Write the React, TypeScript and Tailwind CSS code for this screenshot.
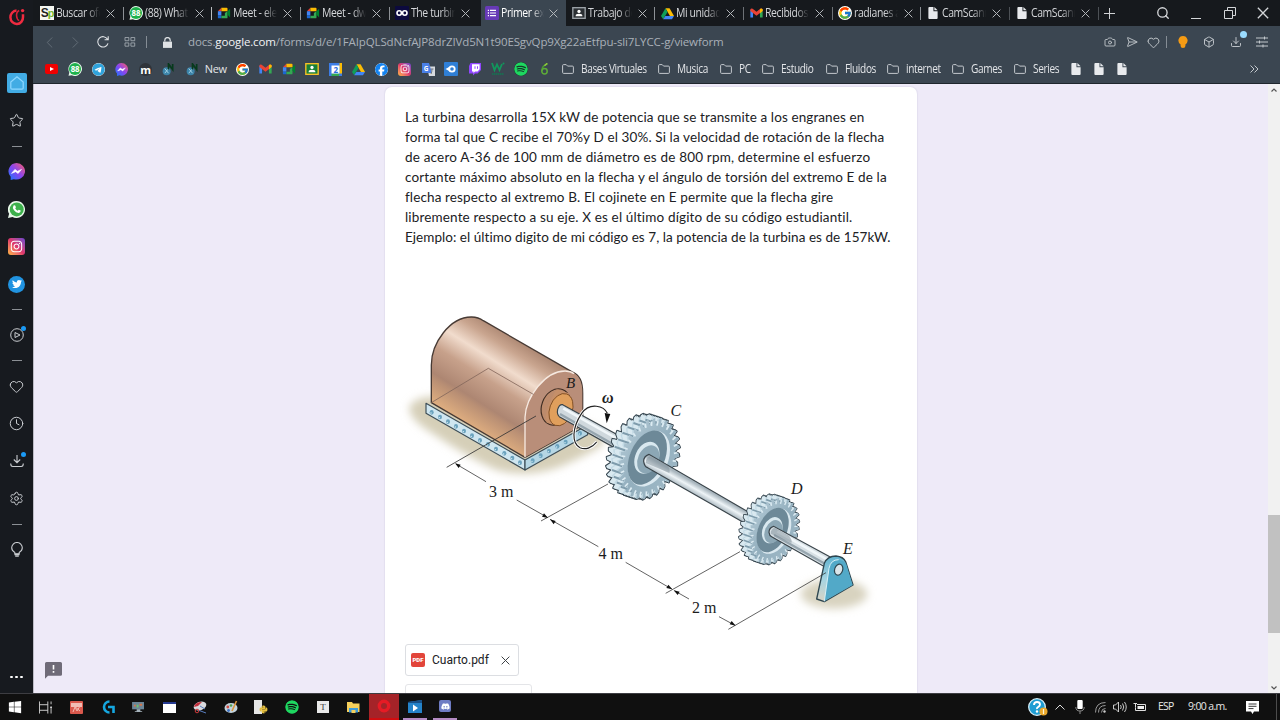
import React from 'react';
import {
  FaYoutube, FaTelegram, FaFacebook, FaInstagram, FaTwitter, FaSpotify, FaDiscord, FaWindows, FaPython,
} from 'react-icons/fa6';
import { FcGoogle } from 'react-icons/fc';
import { Camera, Heart, Box, Download, Star, Clock, Settings, Search, SendHorizontal } from 'lucide-react';

/* ---------- small brand drawings ---------- */

const Meet = () => (
  <svg viewBox="0 0 16 16" className="size-[14px]">
    <path d="M1 6l4-4v4z" fill="#ea4335" />
    <path d="M5 2h6a1 1 0 0 1 1 1v3H8V6H5z" fill="#fbbc04" />
    <path d="M1 6h4v5H1z" fill="#4285f4" />
    <path d="M1 11h4v3H2a1 1 0 0 1-1-1z" fill="#1967d2" />
    <path d="M5 11h4V8l3-2v7a1 1 0 0 1-1 1H5z" fill="#34a853" />
    <path d="M12 6l3-3v10l-3-3z" fill="#00832d" />
  </svg>
);
const Drive = () => (
  <svg viewBox="0 0 16 16" className="size-[13px]">
    <path d="M5.5 1.5h5L16 11h-5z" fill="#fbbc04" />
    <path d="M5.5 1.5L8 6 2.7 15 0 11z" fill="#0f9d58" />
    <path d="M5.3 11H16l-2.5 4H2.7z" fill="#4285f4" />
  </svg>
);
const Gmail = () => (
  <svg viewBox="0 0 16 13" className="h-[10px] w-[13px]">
    <path d="M0 2v10.500h3.500V5z" fill="#4285f4" />
    <path d="M16 2v10.500h-3.500V5z" fill="#34a853" />
    <path d="M0 2q1-2 3-1l5 4 5-4q2-1 3 1v2l-8 6-8-6z" fill="#ea4335" />
    <path d="M12.500 1.400l.5-.4q2-1 3 1v2l-3.500 2.700z" fill="#fbbc04" />
  </svg>
);
const Classroom = ({ gray = false }: { gray?: boolean }) => (
  <svg viewBox="0 0 16 14" className="h-[12px] w-[14px]">
    <rect x="0.8" y="0.8" width="14.4" height="12.4" fill={gray ? '#2b2f33' : '#188038'} stroke={gray ? '#9aa0a6' : '#f6c026'} strokeWidth="1.6" />
    <circle cx="8" cy="5.2" r="1.9" fill="#fff" />
    <path d="M4 10.8q0-2.8 4-2.8t4 2.8z" fill="#fff" />
  </svg>
);
const Bubble88 = () => (
  <svg viewBox="0 0 16 16" className="size-[14px]">
    <path d="M8 0a8 8 0 1 1-3.500 15.200L.6 15.800 1.500 12A8 8 0 0 1 8 0z" fill="#e7f8ec" />
    <circle cx="8" cy="8" r="6.900" fill="#1fb14c" />
    <text x="8" y="11.200" textAnchor="middle" fontSize="9" fontWeight="700" fontFamily="Open Sans, sans-serif" fill="#fff">88</text>
  </svg>
);
const Sp = () => (
  <div className="flex size-[14px] items-center justify-center bg-[#f4f6f0] font-['Liberation_Sans'] text-[12px] leading-none font-bold tracking-[-1px] text-[#222]">
    S<span className="text-[11px] text-[#75b52a]">p</span>
  </div>
);
const Infinity2 = () => (
  <svg viewBox="0 0 14 14" className="size-[14px]">
    <rect width="14" height="14" rx="1" fill="#0c0a3e" />
    <circle cx="4.200" cy="7" r="2.200" fill="none" stroke="#fff" strokeWidth="1.600" />
    <circle cx="9.800" cy="7" r="2.200" fill="none" stroke="#fff" strokeWidth="1.600" />
  </svg>
);
const FormsIcon = () => (
  <svg viewBox="0 0 14 14" className="size-[14px]">
    <rect width="14" height="14" rx="1.500" fill="#673ab7" />
    <path d="M5 4.300h6M5 7h6M5 9.700h6" stroke="#fff" strokeWidth="1.200" />
    <path d="M2.800 4.300H4M2.800 7H4M2.800 9.700H4" stroke="#fff" strokeWidth="1.300" />
  </svg>
);
const Page = () => (
  <svg viewBox="0 0 10 13" className="h-[12px] w-[10px]">
    <path d="M0 1q0-1 1-1h4.500v4.500H10V12q0 1-1 1H1q-1 0-1-1z" fill="#e8eaed" />
    <path d="M6.500 0L10 3.600H6.500z" fill="#e8eaed" />
  </svg>
);
const FolderIcon = () => (
  <svg viewBox="0 0 12 10" className="mx-[6.500px] h-[10px] w-[12px] shrink-0">
    <path d="M.6 8.400V1.600q0-1 1-1h2.600l1.400 1.500h4.800q1 0 1 1v5.300q0 1-1 1H1.600q-1 0-1-1z" fill="none" stroke="#c3c8cd" strokeWidth="1" />
  </svg>
);
const InstaBox = ({ big = false }: { big?: boolean }) => (
  <div className={(big ? 'size-[17px] text-[13px]' : 'size-[13px] text-[10px]') + ' flex items-center justify-center rounded-[3px] bg-linear-to-tr from-[#fdb63a] via-[#e0356c] to-[#6b3fd0] text-white'}>
    <FaInstagram />
  </div>
);
const Messenger = ({ big = false }: { big?: boolean }) => (
  <svg viewBox="0 0 16 16" className={big ? 'size-[17px]' : 'size-[13px]'}>
    <defs>
      <linearGradient id="msg" x1="0" y1="1" x2="1" y2="0">
        <stop offset="0" stopColor="#1877ff" />
        <stop offset=".5" stopColor="#8a45ee" />
        <stop offset="1" stopColor="#ff5f66" />
      </linearGradient>
    </defs>
    <path d="M8 0a8 7.800 0 1 1-2.500 15.200L2.500 16v-3A7.800 7.800 0 0 1 8 0z" fill="url(#msg)" />
    <path d="M3.300 9.800L6.500 6l2.400 1.800L12.700 6 9.500 9.900 7.200 8.200z" fill="#fff" stroke="#fff" strokeWidth=".6" />
  </svg>
);
const Idm = () => (
  <svg viewBox="0 0 14 14" className="size-[13px]">
    <circle cx="5" cy="9" r="4.300" fill="#3b83a8" />
    <path d="M3 6l4 5M7 6L3 11" stroke="#a9d6e8" />
    <path d="M7 7V1l4.500 6V1" fill="none" stroke="#063a1c" strokeWidth="1.800" />
  </svg>
);
const OperaO = () => (
  <svg viewBox="0 0 18 18" className="size-[18px]">
    <path d="M8.500 2.600A6.300 6.700 0 1 0 15 9V6.200" fill="none" stroke="#f02b40" strokeWidth="2.500" />
    <path d="M11.200 2.500q-3 1.500-2.600 5.500.3 3.500 2.600 4.600" fill="none" stroke="#d71f35" strokeWidth="1.600" />
    <circle cx="14.600" cy="2.600" r="1.700" fill="#f02b40" />
  </svg>
);

const XMark = ({ className = '' }: { className?: string }) => (
  <svg viewBox="0 0 10 10" className={className}>
    <path d="M.7.7l8.600 8.600M9.300.7L.7 9.300" stroke="currentColor" strokeWidth="1.100" fill="none" />
  </svg>
);

/* ---------- browser chrome ---------- */

const tabs: { label: string; icon: React.ReactNode; active?: boolean; sep: string }[] = [
  { label: 'Buscar ofe', icon: <Sp />, sep: 'bg-[#8d9196]' },
  { label: '(88) What', icon: <Bubble88 />, sep: 'bg-[#b9bcbf]' },
  { label: 'Meet - ele', icon: <Meet />, sep: 'bg-[#8d9196]' },
  { label: 'Meet - dw', icon: <Meet />, sep: 'bg-[#8d9196]' },
  { label: 'The turbin', icon: <Infinity2 />, sep: 'bg-transparent' },
  { label: 'Primer ex', icon: <FormsIcon />, active: true, sep: 'bg-transparent' },
  { label: 'Trabajo de', icon: <Classroom gray />, sep: 'bg-[#8d9196]' },
  { label: 'Mi unidad', icon: <Drive />, sep: 'bg-[#6d7176]' },
  { label: 'Recibidos', icon: <Gmail />, sep: 'bg-[#6d7176]' },
  { label: 'radianes a', icon: <FcGoogle className="size-[14px] rounded-full bg-white" />, sep: 'bg-[#8d9196]' },
  { label: 'CamScann', icon: <Page />, sep: 'bg-[#4d5156]' },
  { label: 'CamScann', icon: <Page />, sep: 'bg-[#4d5156]' },
];

function TabBar() {
  return (
    <div className="flex h-[26px] items-center bg-[#16191d] text-[#d4d6d9]">
      {tabs.map((t, i) => (
        <div key={i} className="flex h-full w-[88.650px] shrink-0 items-center">
          <div className={(t.active ? 'ml-[3px] w-[85px] bg-[#3b4651] pl-[4px]' : 'w-[88px] pl-[5px]') + ' flex h-full items-center'}>
            <div className="flex w-[14px] shrink-0 justify-center">{t.icon}</div>
            <div className={(t.active ? 'w-[43px] text-white' : 'w-[44px]') + ' ml-[2px] shrink-0 mask-r-from-70% text-[12px] leading-[20px] tracking-[-0.450px] whitespace-nowrap'}>
              <span className="inline-block origin-left scale-x-[0.87]">{t.label}</span>
            </div>
            <XMark className={(t.active ? 'ml-[5px]' : 'ml-[6px]') + ' size-[9px] shrink-0 text-[#b5b8bc]'} />
          </div>
          <div className={'h-[13px] w-px ' + t.sep} />
        </div>
      ))}
      <svg viewBox="0 0 11 11" className="ml-[5px] size-[11px]"><path d="M5.500 0v11M0 5.500h11" stroke="#d0d2d5" /></svg>
      <Search className="ml-[41px] size-[14px]" strokeWidth={2.300} />
      <div className="mt-[10px] ml-[21px] h-px w-[10px] bg-[#d4d6d9]" />
      <svg viewBox="0 0 12 12" className="ml-[23px] size-[12px]">
        <path d="M.5 3.500h8v8h-8zM3.500 3V.5h8v8H9" fill="none" stroke="#d4d6d9" />
      </svg>
      <XMark className="ml-[21px] size-[12px]" />
    </div>
  );
}

function AddressBar() {
  return (
    <div className="flex h-[32px] items-center text-[#c3c8cd]">
      <svg viewBox="0 0 7 12" className="ml-[13px] h-[11px] w-[7px]"><path d="M6.500.5L1 6l5.500 5.500" fill="none" stroke="#66707a" /></svg>
      <svg viewBox="0 0 7 12" className="ml-[19px] h-[11px] w-[7px]"><path d="M.5.5L6 6 .5 11.500" fill="none" stroke="#66707a" /></svg>
      <svg viewBox="0 0 12 12" className="ml-[18px] size-[12px]">
        <path d="M10.500 3.200A5.200 5.200 0 1 0 11 7.300M11.200.3v3.400H7.600" fill="none" stroke="#dfe2e5" strokeWidth="1.100" />
      </svg>
      <svg viewBox="0 0 12 11" className="ml-[15px] h-[10px] w-[12px]">
        <path d="M.5.5h4.200v3.600H.5zM7 .5h4.200v3.600H7zM.5 6.500h4.200v3.600H.5zM7 6.500h4.200v3.600H7z" fill="none" stroke="#a9b0b7" strokeWidth=".9" />
      </svg>
      <div className="ml-[10px] h-[12px] w-px bg-[#858d95]" />
      <svg viewBox="0 0 10 12" className="ml-[16px] h-[11px] w-[9px]">
        <path d="M0 5h10v7H0z" fill="#dfe2e5" /><path d="M2 5V3.500a3 3 0 0 1 6 0V5" fill="none" stroke="#dfe2e5" strokeWidth="1.400" />
      </svg>
      <div className="ml-[16px] w-[916px] text-[11.500px] leading-[20px] tracking-[-0.130px] whitespace-nowrap text-[#a9b0b8]">
        docs.<span className="text-[#f2f3f4]">google.com</span>/forms/d/e/1FAIpQLSdNcfAJP8drZIVd5N1t90ESgvQp9Xg22aEtfpu-sli7LYCC-g/viewform
      </div>
      <div className="flex shrink-0 items-center">
        <Camera className="size-[12px]" strokeWidth={1.800} />
        <SendHorizontal className="ml-[10px] size-[12px]" strokeWidth={1.800} />
        <Heart className="ml-[9px] size-[13px]" strokeWidth={1.800} />
        <div className="ml-[6px] h-[12px] w-px bg-[#858d95]" />
        <svg viewBox="0 0 10 12" className="ml-[11px] h-[12px] w-[10px]">
          <path d="M5 0a4.600 4.600 0 0 1 2.400 8.500V10q0 2-2.400 2T2.600 10V8.500A4.600 4.600 0 0 1 5 0z" fill="#f59b14" />
        </svg>
        <Box className="ml-[15px] size-[12px]" strokeWidth={1.900} />
        <div className="relative ml-[15px]">
          <Download className="size-[12px]" strokeWidth={1.900} />
          <div className="absolute -top-[5px] left-[10px] size-[7px] rounded-full bg-[#9bdcff]" />
        </div>
        <svg viewBox="0 0 12 12" className="ml-[14px] size-[12px]">
          <path d="M0 2h12M0 6h12M0 10h12M8.500.5v3M3.500 4.500v3M7 8.500v3" stroke="#c3c8cd" />
        </svg>
      </div>
    </div>
  );
}

const marks: React.ReactNode[] = [
  <svg viewBox="0 0 13 10" className="h-[10px] w-[13px]"><rect width="13" height="10" rx="2" fill="#f00000" /><path d="M5 3l4 2-4 2z" fill="#fff" /></svg>,
  <Bubble88 />,
  <FaTelegram className="size-[13px] rounded-full bg-white text-[#2fa3dc]" />,
  <Messenger />,
  <div className="flex size-[13px] items-center justify-center rounded-full bg-[#2f343a] text-[11px] leading-none font-bold tracking-[-0.800px] text-white">m</div>,
  <Idm />,
  <Idm />,
];
const marks2: React.ReactNode[] = [
  <FcGoogle className="size-[13px] rounded-full bg-white" />,
  <Gmail />,
  <Meet />,
  <Classroom />,
  <svg viewBox="0 0 13 13" className="size-[13px]"><path d="M0 0h13v13H0z" fill="#3c7de6" /><path d="M10.500 0H13v10.500h-2.500z" fill="#fbbc04" /><path d="M2.500 10.500h8L10 13H2.500z" fill="#34a853" /><path d="M2.500 2.500h8v8h-8z" fill="#fff" /><text x="6.500" y="9.600" textAnchor="middle" fontSize="8" fontWeight="700" fill="#2a6ae0">2</text></svg>,
  <Drive />,
  <FaFacebook className="size-[13px] rounded-full bg-white text-[#1383f0]" />,
  <InstaBox />,
  <svg viewBox="0 0 13 13" className="size-[13px]"><path d="M5 3.500h8V13H7z" fill="#d7dbe0" /><path d="M0 0h7l3 10H0z" fill="#4a80e8" /><text x="4" y="7.500" textAnchor="middle" fontSize="6.500" fontWeight="700" fill="#fff">G</text><path d="M8.500 6h3M10 6q0 3-1 5" stroke="#6f7780" fill="none" /></svg>,
  <svg viewBox="0 0 14 14" className="size-[14px]"><rect width="14" height="14" rx="1" fill="#2f7fd6" /><path d="M1.500 7L6 4.500v5z" fill="#fff" /><circle cx="8" cy="7" r="2.700" fill="none" stroke="#fff" strokeWidth="1.800" /></svg>,
  <svg viewBox="0 0 13 13" className="size-[13px]"><path d="M2.500 0H13v7l-3.500 3.500H7L5 12.500v-2H1V3z" fill="#9146ff" /><path d="M4 1.300h7.600v5L9.600 8.500H7L5.500 10V8.500H4z" fill="#fff" /><path d="M7 3.300v2.500M9.500 3.300v2.500" stroke="#9146ff" /></svg>,
  <svg viewBox="0 0 14 14" className="size-[14px]"><path d="M1 1l2.500 7L6 2.500 8.500 8 11 2" fill="none" stroke="#12965c" strokeWidth="1.800" /><circle cx="12.500" cy="1.500" r="1" fill="#12965c" /><path d="M1 12h12" stroke="#1b6b51" strokeWidth="1.800" strokeDasharray="1.500 .5" /></svg>,
  <FaSpotify className="size-[14px] rounded-full bg-[#17382a] text-[#1ed760]" />,
  <svg viewBox="0 0 10 13" className="h-[12px] w-[9px]"><path d="M8.500 1Q2 2.500 2 9" fill="none" stroke="#4d9c34" strokeWidth="1.700" /><circle cx="5" cy="9" r="3" fill="none" stroke="#5dab38" strokeWidth="1.700" /><path d="M5 3l3-3" stroke="#93c83d" strokeWidth="1.500" /></svg>,
];

function BookmarkFolder({ name, width }: { name: string; width: string }) {
  return (
    <div className={'flex shrink-0 items-center ' + width}>
      <FolderIcon />
      <span className="inline-block origin-left scale-x-[0.84]">{name}</span>
    </div>
  );
}

function Bookmarks() {
  return (
    <div className="flex h-[22px] items-center pl-[7px] text-[12px] leading-[20px] tracking-[-0.420px] whitespace-nowrap text-[#e3e5e8]">
      {marks.map((m, i) => <div key={i} className="flex w-[23.400px] shrink-0 justify-center">{m}</div>)}
      <div className="ml-px w-[25.700px] shrink-0 text-[11px] tracking-[-0.350px]">New</div>
      {marks2.map((m, i) => <div key={i} className="flex w-[23.250px] shrink-0 justify-center">{m}</div>)}
      <BookmarkFolder name="Bases Virtuales" width="w-[95.700px]" />
      <BookmarkFolder name="Musica" width="w-[62px]" />
      <BookmarkFolder name="PC" width="w-[42px]" />
      <BookmarkFolder name="Estudio" width="w-[64px]" />
      <BookmarkFolder name="Fluidos" width="w-[61px]" />
      <BookmarkFolder name="internet" width="w-[65px]" />
      <BookmarkFolder name="Games" width="w-[62px]" />
      <BookmarkFolder name="Series" width="w-[56px]" />
      <div className="flex gap-[13.400px] pl-[7px]"><Page /><Page /><Page /></div>
      <svg viewBox="0 0 9 8" className="ml-[123px] h-[8px] w-[9px]"><path d="M.5.5L4 4 .5 7.500M4.500.5L8 4 4.500 7.500" fill="none" stroke="#c3c8cd" /></svg>
    </div>
  );
}

/* ---------- left sidebar ---------- */

const Dash = () => <div className="flex h-[13.500px] items-center"><div className="h-px w-[10px] bg-[#8b8f94]" /></div>;
const Cell = ({ children, dot = false }: { children: React.ReactNode; dot?: boolean }) => (
  <div className="relative flex h-[37.500px] items-center justify-center">
    {children}
    {dot && <div className="absolute top-[9px] left-[11px] size-[5px] rounded-full bg-[#1b9af5]" />}
  </div>
);

function Sidebar() {
  return (
    <aside className="flex h-full w-[33px] shrink-0 flex-col items-center bg-[#171a1f] text-[#c9ccd0]">
      <div className="flex h-[64.500px] shrink-0 items-start pt-[8px]"><OperaO /></div>
      <Cell>
        <div className="flex size-[20px] items-center justify-center rounded-[2px] bg-[#42ace4]">
          <svg viewBox="0 0 14 14" className="size-[14px]"><path d="M.8 6L7 .8 13.200 6v6q0 1.200-1.200 1.200H2Q.8 13.200.8 12z" fill="none" stroke="#8fd8ff" strokeWidth="1.200" /></svg>
        </div>
      </Cell>
      <Cell><Star className="size-[15px]" strokeWidth={1.600} /></Cell>
      <Dash />
      <Cell><Messenger big /></Cell>
      <Cell>
        <svg viewBox="0 0 17 17" className="size-[17px]">
          <path d="M8.500 0a8.500 8.500 0 1 1-4 16L0 17l1.100-4.200A8.500 8.500 0 0 1 8.500 0z" fill="#e9f7ea" />
          <circle cx="8.700" cy="8.400" r="7" fill="#3db14c" />
          <path d="M5.500 4.500l1.500-.3 1 2-.8 1.100q.9 1.700 2.500 2.400l1-1 2 .9q.1 2-1.700 2.300-3 .2-5-2.600-2-2.600-.5-4.800z" fill="#fff" />
        </svg>
      </Cell>
      <Cell><InstaBox big /></Cell>
      <Cell><div className="flex size-[17px] items-center justify-center rounded-full bg-[#2193e0] text-[10px] text-white"><FaTwitter /></div></Cell>
      <Dash />
      <Cell dot>
        <svg viewBox="0 0 14 14" className="size-[14px]"><circle cx="7" cy="7" r="6.300" fill="none" stroke="currentColor" /><path d="M5 4.500l5 2.500-5 2.500z" fill="none" stroke="currentColor" strokeLinejoin="round" /></svg>
      </Cell>
      <Dash />
      <Cell><Heart className="size-[15px]" strokeWidth={1.600} /></Cell>
      <Cell><Clock className="size-[15px]" strokeWidth={1.600} /></Cell>
      <Cell dot>
        <svg viewBox="0 0 14 14" className="size-[14px]"><path d="M7 1v7.500M3.800 5.500L7 8.700l3.200-3.200M.7 9.500q0 3 2 3h8.600q2 0 2-3" fill="none" stroke="currentColor" strokeWidth="1.100" /></svg>
      </Cell>
      <Cell><Settings className="size-[15px]" strokeWidth={1.600} /></Cell>
      <Dash />
      <Cell>
        <svg viewBox="0 0 12 15" className="h-[15px] w-[12px]"><path d="M3.800 10.500Q.7 8.700.7 5.800a5.300 5.300 0 0 1 10.600 0q0 2.900-3.100 4.700v1.300H3.800z" fill="none" stroke="currentColor" strokeWidth="1.100" /><path d="M3.500 12.500h5M4.200 14.200h3.600" stroke="currentColor" strokeWidth="1.300" /></svg>
      </Cell>
      <div className="mt-auto mb-[15px] flex gap-[2.500px]">
        <div className="size-[2.500px] rounded-full bg-white" /><div className="size-[2.500px] rounded-full bg-white" /><div className="size-[2.500px] rounded-full bg-white" />
      </div>
    </aside>
  );
}

/* ---------- turbine figure ---------- */

const TILT = (21 * Math.PI) / 180;
function ellipsePoint(cx: number, cy: number, rx: number, ry: number, a: number) {
  const x = rx * Math.cos(a);
  const y = ry * Math.sin(a);
  return [cx + x * Math.cos(TILT) - y * Math.sin(TILT), cy + x * Math.sin(TILT) + y * Math.cos(TILT)];
}
function toothedRim(cx: number, cy: number, rx: number, ry: number, n: number) {
  const pts: string[] = [];
  for (let i = 0; i < n; i++) {
    [[0, 0.86], [0.3, 0.99], [0.62, 1.02], [0.8, 0.87]].forEach(([o, k]) => {
      const a = ((i + o) / n) * Math.PI * 2;
      pts.push(ellipsePoint(cx, cy, rx * k, ry * k, a).map((v) => v.toFixed(1)).join(','));
    });
  }
  return pts.join(' ');
}

function Gear({ cx, cy, s }: { cx: number; cy: number; s: number }) {
  const n = 28;
  const rim = toothedRim(0, 0, 85, 125, n);
  const steps = [0, 1, 2, 3, 4, 5, 6, 7, 8];
  return (
    <g transform={`translate(${cx} ${cy}) scale(${s})`}>
      {steps.map((k) => (
        <polygon key={'o' + k} points={rim} transform={`translate(${-36 + k * 4.5} ${-12 + k * 1.5})`} fill="#33434d" stroke="#33434d" strokeWidth="6" strokeLinejoin="round" />
      ))}
      {steps.map((k) => (
        <polygon key={'f' + k} points={rim} transform={`translate(${-36 + k * 4.5} ${-12 + k * 1.5})`} fill={k % 4 === 3 ? '#c3dae5' : '#d9e9f0'} />
      ))}
      {Array.from({ length: n }, (_, i) => {
        const [x, y] = ellipsePoint(0, 0, 75, 110, ((i + 0.9) / n) * Math.PI * 2);
        return <path key={i} d={`M${x - 32},${y - 11}L${x},${y}`} stroke="#7f9cac" strokeWidth="6" />;
      })}
      <polygon points={rim} fill="url(#gearFace)" />
      {Array.from({ length: n }, (_, i) => {
        const a = ((i + 0.15) / n) * Math.PI * 2;
        const [x1, y1] = ellipsePoint(0, 0, 70, 103, a);
        const [x2, y2] = ellipsePoint(0, 0, 80, 117, a);
        return <path key={i} d={`M${x1},${y1}L${x2},${y2}`} stroke="#dcebf2" strokeWidth="5" />;
      })}
      <g transform="rotate(24)">
        <ellipse rx="57" ry="88" fill="#dbe9f0" />
        <ellipse cx="-6" cy="-1" rx="52" ry="86" fill="#6d8998" />
        <ellipse cx="-7" rx="35" ry="50" fill="#d8e8ef" />
        <ellipse cx="-1" cy="3" rx="31" ry="44" fill="#8ca7b5" />
      </g>
    </g>
  );
}

const bolts = [[95, 337], [120, 351], [144, 365], [168, 379], [192, 393], [216, 407], [240, 421], [264, 433], [288, 447], [313, 460], [337, 474], [360, 488], [398, 482], [422, 467], [447, 453], [472, 439], [497, 426], [540, 400]];

function TurbineFigure() {
  return (
    <svg viewBox="400 300 500 340" className="-ml-[5px] block h-[340px] w-[500px]">
      <defs>
        <linearGradient id="body" gradientUnits="userSpaceOnUse" x1="310" y1="96" x2="154" y2="343">
          <stop offset="0" stopColor="#b08b76" />
          <stop offset=".12" stopColor="#c9a58f" />
          <stop offset=".3" stopColor="#f1dccd" />
          <stop offset=".5" stopColor="#c7a18b" />
          <stop offset=".74" stopColor="#ad8672" />
          <stop offset=".79" stopColor="#b98f74" />
          <stop offset="1" stopColor="#dfae80" />
        </linearGradient>
        <linearGradient id="shaft" gradientUnits="userSpaceOnUse" x1="355" y1="285" x2="337" y2="317">
          <stop offset="0" stopColor="#a9b6be" /><stop offset=".4" stopColor="#eef4f7" /><stop offset="1" stopColor="#93a3ad" />
        </linearGradient>
        <linearGradient id="gearFace" x1="0" y1="0" x2="1" y2="1">
          <stop offset="0" stopColor="#bcd1dc" /><stop offset=".5" stopColor="#93afbe" /><stop offset="1" stopColor="#a3bcc9" />
        </linearGradient>
        <linearGradient id="side" x1="0" y1="0" x2="0" y2="1">
          <stop offset="0" stopColor="#5fb2cf" /><stop offset=".5" stopColor="#a5d4e2" /><stop offset="1" stopColor="#d9d3c4" />
        </linearGradient>
        <filter id="soft" x="-20%" y="-30%" width="140%" height="160%"><feGaussianBlur stdDeviation="12" /></filter>
      </defs>

      <g transform="translate(400 300) scale(.33333)">
        <path d="M28 320Q50 285 120 290L560 370Q640 400 600 440Q560 465 480 500Q380 535 290 510Q200 470 90 395Q25 355 28 320z" fill="#d5cfb8" filter="url(#soft)" />
        <path d="M78 310L375 480V510L78 340z" fill="#cfe6f0" stroke="#3c4d57" strokeWidth="3.500" strokeLinejoin="round" />
        <path d="M375 480L563 375V404L375 510z" fill="#b5d6e4" stroke="#3c4d57" strokeWidth="3.500" strokeLinejoin="round" />
        {bolts.map(([x, y]) => <g key={x}><ellipse cx={x} cy={y} rx="6" ry="7" fill="#6ba3be" /><circle cx={x - 2} cy={y + 2} r="2" fill="#d9eef6" /></g>)}
        <path d="M94 308V195C94 130 150 50 215 51Q235 51 250 62L515 215C540 225 548 245 548 280V375L375 472z" fill="url(#body)" stroke="#473a34" strokeWidth="4" strokeLinejoin="round" />
        <path d="M375 472V352C378 290 435 214 495 213C535 213 547 245 547 278V375z" fill="#b98e79" />
        <path d="M375 472V352C378 290 435 214 495 213Q512 213 522 221" fill="none" stroke="#f6e9e0" strokeWidth="4" />
        <path d="M94 308L265 205L400 283" fill="none" stroke="#84685c" strokeWidth="2.500" />
        <g>
          <ellipse cx="468" cy="321" rx="43" ry="56" fill="#bd8b6c" stroke="#3e2c22" strokeWidth="3.500" transform="rotate(20 468 321)" />
          <path d="M470 268L507 280L488 376L440 368Q430 330 470 268z" fill="#c58f69" />
          <ellipse cx="483" cy="329" rx="34" ry="50" fill="#e09f5c" stroke="#7c4a20" strokeWidth="2.500" transform="rotate(20 483 329)" />
        </g>
        <path d="M140 502L408 348" stroke="#333" strokeWidth="2.500" />
      </g>

      <g transform="translate(580 390) scale(.33333)">
        <path d="M-52 44L130 144L112 178L-62 80Q-70 72 -67 58Q-62 42 -52 44z" fill="#cfd8dd" stroke="#3a444a" strokeWidth="3.500" />
        <path d="M-50 55L122 152" stroke="#f0f6f9" strokeWidth="8" />
        <path d="M-60 72L114 171" stroke="#97a6af" strokeWidth="7" />
        <path d="M82 70C72 48 30 35 5 70C-25 115 -25 160 0 173C15 180 35 175 50 156" fill="none" stroke="#fff" strokeWidth="9" />
        <path d="M82 70C72 48 30 35 5 70C-25 115 -25 160 0 173C15 180 35 175 50 156" fill="none" stroke="#222" strokeWidth="3.500" />
        <path d="M74 69L91 72L80 100z" fill="#111" />

        <Gear cx={207} cy={206} s={1} />
        <path d="M207 193Q191 198 191 214Q193 230 203 233L492 398L512 370z" fill="url(#shaft)" stroke="#3a444a" strokeWidth="3.500" />
        <path d="M210 198l50 26q12 12 8 25l-70-30q-2-14 12-21z" fill="#798a94" opacity=".5" />

        <Gear cx={582} cy={423} s={0.82} />
        <path d="M581 409Q567 413 567 427Q568 437 575 440L735 531L752 502z" fill="#d7e0e5" stroke="#3a444a" strokeWidth="3.500" />
        <path d="M592 424L746 511" stroke="#f0f6f9" strokeWidth="8" /><path d="M582 435L736 522" stroke="#97a6af" strokeWidth="7" />
        <path d="M584 413l42 24q12 12 8 22l-62-28q0-14 12-18z" fill="#798a94" opacity=".5" />

        <ellipse cx="762" cy="612" rx="100" ry="44" fill="#d8d3bf" filter="url(#soft)" />
        <path d="M710 627L733 520Q742 498 768 498Q790 500 797 515L819 585L733 635z" fill="url(#side)" stroke="#2e4650" strokeWidth="4" strokeLinejoin="round" />
        <path d="M733 634L747 535Q752 509 776 509Q792 510 799 523L818 585z" fill="#52a9c8" />
        <path d="M733 634L747 535Q752 509 776 509" fill="none" stroke="#d8f1f8" strokeWidth="3" />
        <ellipse cx="776" cy="539" rx="12" ry="17" fill="#dbe5ea" stroke="#2e4650" strokeWidth="3.500" transform="rotate(18 776 539)" />

        <g stroke="#333" strokeWidth="2.300" fill="none">
          <path d="M-372 222L-282 275M-190 330L-98 382M-117 393L84 282" />
          <path d="M-90 388L55 470M137 517L275 597M257 610L480 485" />
          <path d="M283 602L327 627M417 680L465 706M445 718L738 548" />
        </g>
        <g fill="#111">
          <path d="M-375 220l17 4-6 10zM-96 384l-18-4 6-10zM-90 388l17 5-6 10zM277 598l-18-4 6-10zM281 601l18 4-6 10zM467 707l-18-4 6-10z" />
        </g>
      </g>

      <g fontFamily="Liberation Serif, Times New Roman, serif" fill="#1c1c1c" fontSize="16">
        <text x="489" y="496.500">3 m</text>
        <text x="598.500" y="559">4 m</text>
        <text x="692" y="613">2 m</text>
        <g fontStyle="italic">
          <text x="566" y="388" fontSize="15">B</text>
          <text x="602" y="402.500" fontSize="16" fontWeight="700">ω</text>
          <text x="670.500" y="416">C</text>
          <text x="791" y="494">D</text>
          <text x="843" y="554">E</text>
        </g>
      </g>
    </svg>
  );
}

/* ---------- form card ---------- */

function FormCard() {
  return (
    <div className="mt-[3px] ml-[351px] h-[640px] w-[532px] shrink-0 rounded-[7px] bg-white pt-[20px] pl-[20px] shadow-[0_0_1px_1px_rgba(90,80,130,0.07)]">
      <div className="font-['Lato'] text-[13.500px] leading-[20px] whitespace-nowrap text-[#202124]">
        <p className="tracking-[0.100px]">La turbina desarrolla 15X kW de potencia que se transmite a los engranes en</p>
        <p className="tracking-[0.123px]">forma tal que C recibe el 70%y D el 30%. Si la velocidad de rotación de la flecha</p>
        <p className="tracking-[0.180px]">de acero A-36 de 100 mm de diámetro es de 800 rpm, determine el esfuerzo</p>
        <p className="tracking-[0.130px]">cortante máximo absoluto en la flecha y el ángulo de torsión del extremo E de la</p>
        <p className="tracking-[0.127px]">flecha respecto al extremo B. El cojinete en E permite que la flecha gire</p>
        <p className="tracking-[0.153px]">libremente respecto a su eje. X es el último dígito de su código estudiantil.</p>
        <p className="tracking-[0.044px]">Ejemplo: el último digito de mi código es 7, la potencia de la turbina es de 157kW.</p>
      </div>
      <div className="mt-[53px] h-[340px]"><TurbineFigure /></div>
      <div className="mt-[4px] flex h-[32px] w-[114px] items-center rounded-[3px] border border-[#dcdee2] pl-[5px]">
        <div className="flex size-[14px] items-center justify-center rounded-[2px] bg-[#e2453a] font-['Roboto'] text-[6px] leading-none font-black text-white">PDF</div>
        <span className="ml-[7px] font-['Roboto'] text-[12px] leading-[16px] text-[#202124]">Cuarto.pdf</span>
        <XMark className="ml-[12px] size-[9px] text-[#3c4043]" />
      </div>
      <div className="mt-[8px] h-[32px] w-[127px] rounded-[3px] border border-[#e4e5e8]" />
    </div>
  );
}

function PageArea() {
  return (
    <main className="flex min-h-0 flex-1 border-l border-[#bdbcc6] bg-[#eeeaf8]">
      <div className="flex min-w-0 flex-1 overflow-hidden">
        <div className="flex w-0 items-end">
          <svg viewBox="0 0 17 17" className="mb-[14px] ml-[11px] size-[17px] shrink-0">
            <path d="M0 1.500Q0 0 1.500 0h14Q17 0 17 1.500v11q0 1.300-1.500 1.300H3L0 16.800z" fill="#6f6b78" />
            <path d="M8.500 3v4.500M8.500 9v1.700" stroke="#fff" strokeWidth="1.600" />
          </svg>
        </div>
        <FormCard />
      </div>
      <div className="flex w-[12px] flex-col items-center bg-[#f1f1f1] pt-[4px] pb-[3px]">
        <svg viewBox="0 0 6 4" className="h-[4px] w-[6px]"><path d="M.5 3.500L3 1l2.500 2.500" fill="none" stroke="#555" strokeWidth="1.200" /></svg>
        <div className="mt-[423px] h-[118px] w-full bg-[#c1c1c1]" />
        <svg viewBox="0 0 6 4" className="mt-auto h-[4px] w-[6px]"><path d="M.5.5L3 3 5.500.5" fill="none" stroke="#555" strokeWidth="1.200" /></svg>
      </div>
    </main>
  );
}

/* ---------- desktop taskbar ---------- */

const apps: React.ReactNode[] = [
  <svg viewBox="0 0 13 13" className="size-[13px]"><rect width="13" height="13" rx="1" fill="#d9584c" /><path d="M1 2h11v4H1z" fill="#f0bdb4" /><path d="M3 11l2-5 2 4 3-5M3 4l7 6" fill="none" stroke="#f3b9b0" /></svg>,
  <svg viewBox="0 0 14 14" className="size-[14px]"><path d="M8.500 1.500A5.500 5.500 0 1 0 8.500 12.500" fill="none" stroke="#15a7e0" strokeWidth="2.600" /><path d="M7 7h5.500v6" fill="none" stroke="#15a7e0" strokeWidth="2.600" /></svg>,
  <svg viewBox="0 0 14 12" className="h-[11px] w-[13px]"><path d="M0 0h13v8H0z" fill="#6b8597" /><path d="M5 8h4v2h2v1H3v-1h2z" fill="#a7b4bc" /><path d="M2 3h2v2H2zM8 2h3v2H8z" fill="#d3754a" /><path d="M5 3h2v3H5z" fill="#6ec06d" /></svg>,
  <svg viewBox="0 0 13 11" className="h-[11px] w-[13px]"><path d="M0 0h13v11H0z" fill="#fff" /><path d="M0 0h13v2H0z" fill="#253a91" /></svg>,
  <svg viewBox="0 0 14 13" className="h-[13px] w-[14px]"><ellipse cx="7" cy="5" rx="6.500" ry="4.200" fill="#d9dade" transform="rotate(-20 7 5)" /><path d="M1 6q1-5 8-5l-4 4z" fill="#c22f3c" /><path d="M5 9l8 3M7 5l5 3" stroke="#5a7fc0" /><circle cx="4" cy="10" r="1.800" fill="none" stroke="#d03a3a" /></svg>,
  <svg viewBox="0 0 14 14" className="size-[14px]"><ellipse cx="7" cy="8" rx="6.500" ry="5" fill="#c3d2dc" /><circle cx="3.800" cy="7" r="1.400" fill="#cf4b43" /><circle cx="7" cy="5.500" r="1.300" fill="#4f9c4c" /><circle cx="4.500" cy="10.500" r="1.400" fill="#3e74c4" /><path d="M8 11l4.500-10" stroke="#d8943a" strokeWidth="1.600" /></svg>,
  <div className="flex size-[14px] items-end justify-end bg-linear-to-r from-[#e6e6e6] from-60% to-transparent to-60%"><FaPython className="size-[9px] text-[#e5bf3e]" /></div>,
  <FaSpotify className="size-[14px] rounded-full text-[#1ed760]" />,
  <div className="flex size-[12px] items-center justify-center bg-[#e9e9e9] font-['Liberation_Serif'] text-[9px] leading-none text-[#333]">T</div>,
  <svg viewBox="0 0 13 12" className="h-[12px] w-[13px]"><path d="M0 1h5l1 1.500h6.500V11H0z" fill="#f5cf5b" /><path d="M2 7h9v4.500H2z" fill="#3e9bd9" /><path d="M4.500 9h4v3h-4z" fill="#f5cf5b" /></svg>,
];

function Taskbar() {
  return (
    <footer className="flex h-[27px] shrink-0 items-stretch border-t border-[#3d3d42] bg-[#101010] text-[#e8e8e8]">
      <div className="flex w-[29px] items-center justify-center"><FaWindows className="size-[14px] text-white" /></div>
      <div className="flex w-[32.600px] items-center justify-center">
        <svg viewBox="0 0 14 13" className="size-[13px]"><path d="M.5 0v13M9.500 0v13M.5 3.500h9M.5 9.500h9M13 0v3M13 5v8M12 6.500h2" fill="none" stroke="#d5d5d5" /></svg>
      </div>
      {apps.map((a, i) => <div key={i} className="flex w-[30.760px] items-center justify-center">{a}</div>)}
      <div className="flex w-[30px] items-center justify-center border-b-2 border-[#d00d10] bg-[#a52328]">
        <svg viewBox="0 0 14 14" className="size-[14px]"><circle cx="7" cy="7" r="4.700" fill="none" stroke="#e61b25" strokeWidth="3.400" /></svg>
      </div>
      <div className="flex w-[31px] items-center justify-center">
        <div className="flex h-full w-[24px] items-center justify-center border-b-2 border-[#b48bc4]">
          <svg viewBox="0 0 14 13" className="h-[13px] w-[14px]"><path d="M0 2l14-2v13H0z" fill="#2483c9" /><path d="M0 2l14-2v3H0z" fill="#174f87" /><path d="M5 4.500l5 3.500-5 3.500z" fill="#fff" /></svg>
        </div>
      </div>
      <div className="flex w-[30px] items-center justify-center">
        <div className="flex h-full w-[24px] items-center justify-center border-b-2 border-[#b48bc4]">
          <div className="flex size-[12px] items-center justify-center rounded-[2px] bg-[#6e7cc4] text-[9px] text-white"><FaDiscord /></div>
        </div>
      </div>
      <div className="ml-auto flex items-center">
        <svg viewBox="0 0 20 18" className="h-[18px] w-[20px]"><circle cx="9" cy="9" r="8.300" fill="#1d9cd3" stroke="#d6eef8" strokeWidth="1.300" /><path d="M6 7q0-3 3-3t3 2.500q0 1.500-1.700 2.300T9 11" fill="none" stroke="#fff" strokeWidth="1.900" /><circle cx="9" cy="13.500" r="1.200" fill="#fff" /><circle cx="15.500" cy="13.500" r="4" fill="#eba92c" /><path d="M15.500 11v5" stroke="#fff6d8" strokeWidth="1.200" /></svg>
        <svg viewBox="0 0 10 6" className="ml-[7px] h-[6px] w-[10px]"><path d="M.5 5.500L5 1l4.500 4.500" fill="none" stroke="#ddd" /></svg>
        <svg viewBox="0 0 10 14" className="ml-[10px] h-[14px] w-[10px]"><rect x="2.300" width="5.400" height="9" rx="1" fill="#fff" /><path d="M.8 7q0 4 4.200 4t4.200-4M5 11v3" fill="none" stroke="#8d8d8d" /></svg>
        <svg viewBox="0 0 11 11" className="ml-[10px] size-[11px]"><path d="M.5 10.500q0-10 10-10M3.500 10.500q0-7 7-7M6.500 10.500q0-4 4-4" fill="none" stroke="#999" /><circle cx="9.500" cy="9.500" r="1.200" fill="#ccc" /></svg>
        <svg viewBox="0 0 14 12" className="ml-[7px] h-[12px] w-[14px]"><path d="M.5 4h2L5.500 1v10l-3-3h-2zM7.500 4q1.500 2 0 4M9.500 2.500q2.500 3.500 0 7M11.500 1q3.500 5 0 10" fill="none" stroke="#ddd" strokeWidth=".9" /></svg>
        <svg viewBox="0 0 14 10" className="ml-[6px] h-[10px] w-[14px]"><path d="M4 2.500h8.500v6h-10v-3M.5 1.500h3.500M2.500 1.500v4" fill="none" stroke="#ddd" /><path d="M4.500 4h6.500v3H4.500z" fill="#eee" /></svg>
        <span className="ml-[11px] w-[30px] text-[10.500px] tracking-[-0.800px]">ESP</span>
        <span className="w-[49px] text-[10.500px] tracking-[-0.650px] whitespace-nowrap">9:00 a.m.</span>
        <svg viewBox="0 0 13 13" className="ml-[9px] size-[13px]"><path d="M0 0h13v10.500H8L6.500 13 5 10.500H0z" fill="#fff" /><path d="M2.500 3h8M2.500 5.300h8M2.500 7.600h5" stroke="#222" strokeWidth=".9" /></svg>
        <div className="mr-[3px] ml-[17px] h-[26px] w-px bg-[#4c4c4c]" />
      </div>
    </footer>
  );
}

export default function App() {
  return (
    <div className="flex h-[720px] w-[1280px] flex-col overflow-hidden bg-[#171a1f] font-['Open_Sans',sans-serif]">
      <div className="flex h-[693px] shrink-0">
        <Sidebar />
        <div className="flex min-w-0 flex-1 flex-col">
          <div className="bg-[#16191d] pl-[2px]"><TabBar /></div>
          <div className="h-[58px] shrink-0 border-b border-[#1f262d] bg-[#3b4651]">
            <AddressBar />
            <Bookmarks />
          </div>
          <PageArea />
        </div>
      </div>
      <Taskbar />
    </div>
  );
}
